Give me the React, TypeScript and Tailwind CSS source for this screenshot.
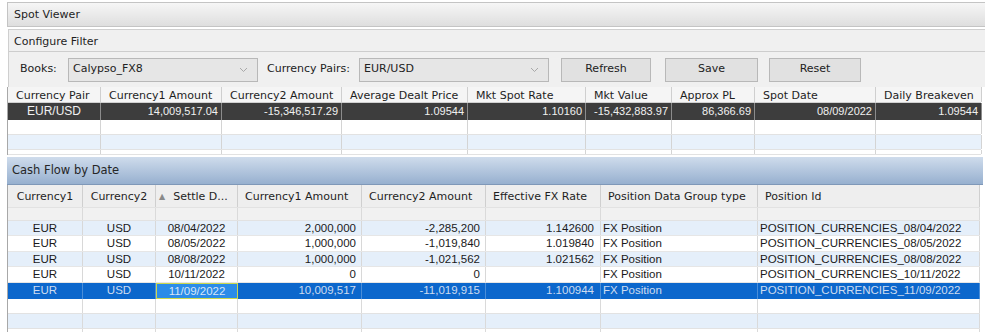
import React from "react";

const ui = "font-['DejaVu_Sans',sans-serif]";
const data = "font-['Liberation_Sans',Arial,sans-serif]";

const topCols = [
  "Currency Pair",
  "Currency1 Amount",
  "Currency2 Amount",
  "Average Dealt Price",
  "Mkt Spot Rate",
  "Mkt Value",
  "Approx PL",
  "Spot Date",
  "Daily Breakeven",
];

const topRow = [
  "EUR/USD",
  "14,009,517.04",
  "-15,346,517.29",
  "1.09544",
  "1.10160",
  "-15,432,883.97",
  "86,366.69",
  "08/09/2022",
  "1.09544",
];

const flowCols = [
  "Currency1",
  "Currency2",
  "Settle D...",
  "Currency1 Amount",
  "Currency2 Amount",
  "Effective FX Rate",
  "Position Data Group type",
  "Position Id",
];

const flows = [
  ["EUR", "USD", "08/04/2022", "2,000,000", "-2,285,200", "1.142600", "FX Position", "POSITION_CURRENCIES_08/04/2022"],
  ["EUR", "USD", "08/05/2022", "1,000,000", "-1,019,840", "1.019840", "FX Position", "POSITION_CURRENCIES_08/05/2022"],
  ["EUR", "USD", "08/08/2022", "1,000,000", "-1,021,562", "1.021562", "FX Position", "POSITION_CURRENCIES_08/08/2022"],
  ["EUR", "USD", "10/11/2022", "0", "0", "", "FX Position", "POSITION_CURRENCIES_10/11/2022"],
  ["EUR", "USD", "11/09/2022", "10,009,517", "-11,019,915", "1.100944", "FX Position", "POSITION_CURRENCIES_11/09/2022"],
];

const flowAlign = [
  "text-center",
  "text-center",
  "text-center",
  "text-right pr-[5px]",
  "text-right pr-[5px]",
  "text-right pr-[6px]",
  "text-left pl-[2px]",
  "text-left pl-[2px]",
];

const rowHeights = ["h-[15px]", "h-[16px]", "h-[15px]", "h-[16px]", "h-[16px]"];

function Chevron() {
  return (
    <svg width="9" height="6" viewBox="0 0 9 6" className="ml-auto mr-[9px]">
      <path d="M1 1l3.5 3.5L8 1" fill="none" stroke="#a8a8a8" strokeWidth="1" />
    </svg>
  );
}

function Combo({ value, w }: { value: string; w: string }) {
  return (
    <div className={`${w} h-[24px] flex items-center bg-[#e6e6e6] border border-[#b8b8b8] pl-[4px] text-[11px] text-[#222]`}>
      {value}
      <Chevron />
    </div>
  );
}

function Btn({ label, w }: { label: string; w: string }) {
  return (
    <div className={`${w} h-[24px] flex items-center justify-center bg-[#e1e1e1] border border-[#b8b8b8] text-[11px] text-[#222]`}>
      {label}
    </div>
  );
}

function TopBlank({ bg, h }: { bg: string; h: string }) {
  return (
    <div className={`grid grid-cols-[93px_121px_120px_126px_118px_86px_83px_121px_106px] ${h} ${bg} border-b border-[#e2e2e2]`}>
      {topCols.map((c) => (
        <div key={c} className="border-r border-[#d4d4d4]" />
      ))}
    </div>
  );
}

function FlowBlank({ bg, h }: { bg: string; h: string }) {
  return (
    <div className={`grid grid-cols-[75px_73px_82px_124px_124px_115px_157px_222px] ${h} ${bg} border-b border-[#e2e2e2]`}>
      {flowCols.map((c) => (
        <div key={c} className="border-r border-[#dadada]" />
      ))}
    </div>
  );
}

export default function App() {
  return (
    <div className={`w-[985px] h-[332px] overflow-hidden bg-white pt-[2px] pl-[7px] ${ui}`}>
      <div className="h-[25px] flex items-center pl-[6px] pt-[1px] text-[11px] text-[#1e1e1e] bg-gradient-to-b from-[#f6f6f6] to-[#dedede] border-l border-t border-b border-[#c4c4c4]">
        Spot Viewer
      </div>

      <div className="mt-[2px] ml-[1px] bg-[#f0f0f0] border-l border-t border-[#cfcfcf]">
        <div className="h-[22px] flex items-center pl-[5px] pt-[3px] text-[11px] text-[#1e1e1e] border-b border-[#cdcdcd]">
          Configure Filter
        </div>
        <div className="h-[35px] flex items-center text-[11px] text-[#222]">
          <span className="ml-[11px] w-[48px]">Books:</span>
          <Combo value="Calypso_FX8" w="w-[190px]" />
          <span className="ml-[9px] w-[92px]">Currency Pairs:</span>
          <Combo value="EUR/USD" w="w-[190px]" />
          <div className="ml-[12px]">
            <Btn label="Refresh" w="w-[90px]" />
          </div>
          <div className="ml-[14px]">
            <Btn label="Save" w="w-[93px]" />
          </div>
          <div className="ml-[11px]">
            <Btn label="Reset" w="w-[92px]" />
          </div>
        </div>
      </div>

      <div className="w-[974px] border-l border-[#a8a8a8]">
        <div className="grid grid-cols-[93px_121px_120px_126px_118px_86px_83px_121px_106px] h-[16px] bg-[#f5f5f5] border-b border-[#d0d0d0]">
          {topCols.map((c) => (
            <div key={c} className="border-r border-[#cfcfcf] pl-[8px] pt-[1px] text-[11px] leading-[15px] text-[#1e1e1e] whitespace-nowrap overflow-hidden">
              {c}
            </div>
          ))}
        </div>
        <div className={`grid grid-cols-[93px_121px_120px_126px_118px_86px_83px_121px_106px] h-[17px] bg-[#3d3d3d] ${data}`}>
          {topRow.map((v, i) => (
            <div
              key={i}
              className={`border-r border-[#8c8c8c] text-[11px] leading-[17px] text-[#f0f0f0] whitespace-nowrap overflow-hidden ${i === 0 ? "text-center text-[12px]" : "text-right pr-[3px]"}`}
            >
              {v}
            </div>
          ))}
        </div>
        <TopBlank bg="bg-white" h="h-[15px]" />
        <TopBlank bg="bg-[#e8f1fb]" h="h-[15px]" />
        <TopBlank bg="bg-white" h="h-[5px]" />
      </div>

      <div className="mt-[2px] w-[976px]">
        <div className="h-[28px] flex items-center pl-[5px] pt-[1px] text-[11.5px] text-[#262626] bg-gradient-to-b from-[#cfdcec] to-[#97b0cf] border-b border-[#7f98b8]">
          Cash Flow by Date
        </div>
        <div className="w-[973px] border-l border-[#a8a8a8]">
          <div className="grid grid-cols-[75px_73px_82px_124px_124px_115px_157px_222px] h-[23px] bg-[#eeeeee] border-b border-[#e2e2e2]">
            {flowCols.map((c, i) => (
              <div
                key={c}
                className={`border-r border-[#cfcfcf] text-[11px] text-[#1e1e1e] whitespace-nowrap overflow-hidden flex items-center pt-[2px] ${i < 2 ? "justify-center" : "pl-[7px]"}`}
              >
                {i === 2 && <span className="text-[8px] text-[#8a8a8a] mr-[8px] -ml-[4px]">▲</span>}
                {c}
              </div>
            ))}
          </div>
          <FlowBlank bg="bg-[#f1f1f1]" h="h-[13px]" />
          {flows.map((r, ri) => {
            const sel = ri === 4;
            const bg = sel ? "bg-[#0c67cc]" : ri % 2 === 0 ? "bg-[#e5effa]" : "bg-white";
            return (
              <div
                key={ri}
                className={`grid grid-cols-[75px_73px_82px_124px_124px_115px_157px_222px] ${rowHeights[ri]} ${bg} ${data} ${sel ? "" : "border-b border-[#e6e6e6]"}`}
              >
                {r.map((v, ci) => {
                  const focus = sel && ci === 2;
                  return (
                    <div
                      key={ci}
                      className={`${flowAlign[ci]} text-[11.5px] leading-[15px] whitespace-nowrap overflow-hidden ${
                        focus
                          ? "bg-[#2b8ce8] border border-[#cbd84f] text-[#d8e6f8] leading-[14px]"
                          : sel
                          ? "border-r border-[#4b8ed8] text-[#cddcf0]"
                          : "border-r border-[#d8d8d8] text-[#1a1a1a]"
                      }`}
                    >
                      {v}
                    </div>
                  );
                })}
              </div>
            );
          })}
          <FlowBlank bg="bg-white" h="h-[15px]" />
          <FlowBlank bg="bg-[#e5effa]" h="h-[15px]" />
          <FlowBlank bg="bg-white" h="h-[5px]" />
        </div>
      </div>
    </div>
  );
}
